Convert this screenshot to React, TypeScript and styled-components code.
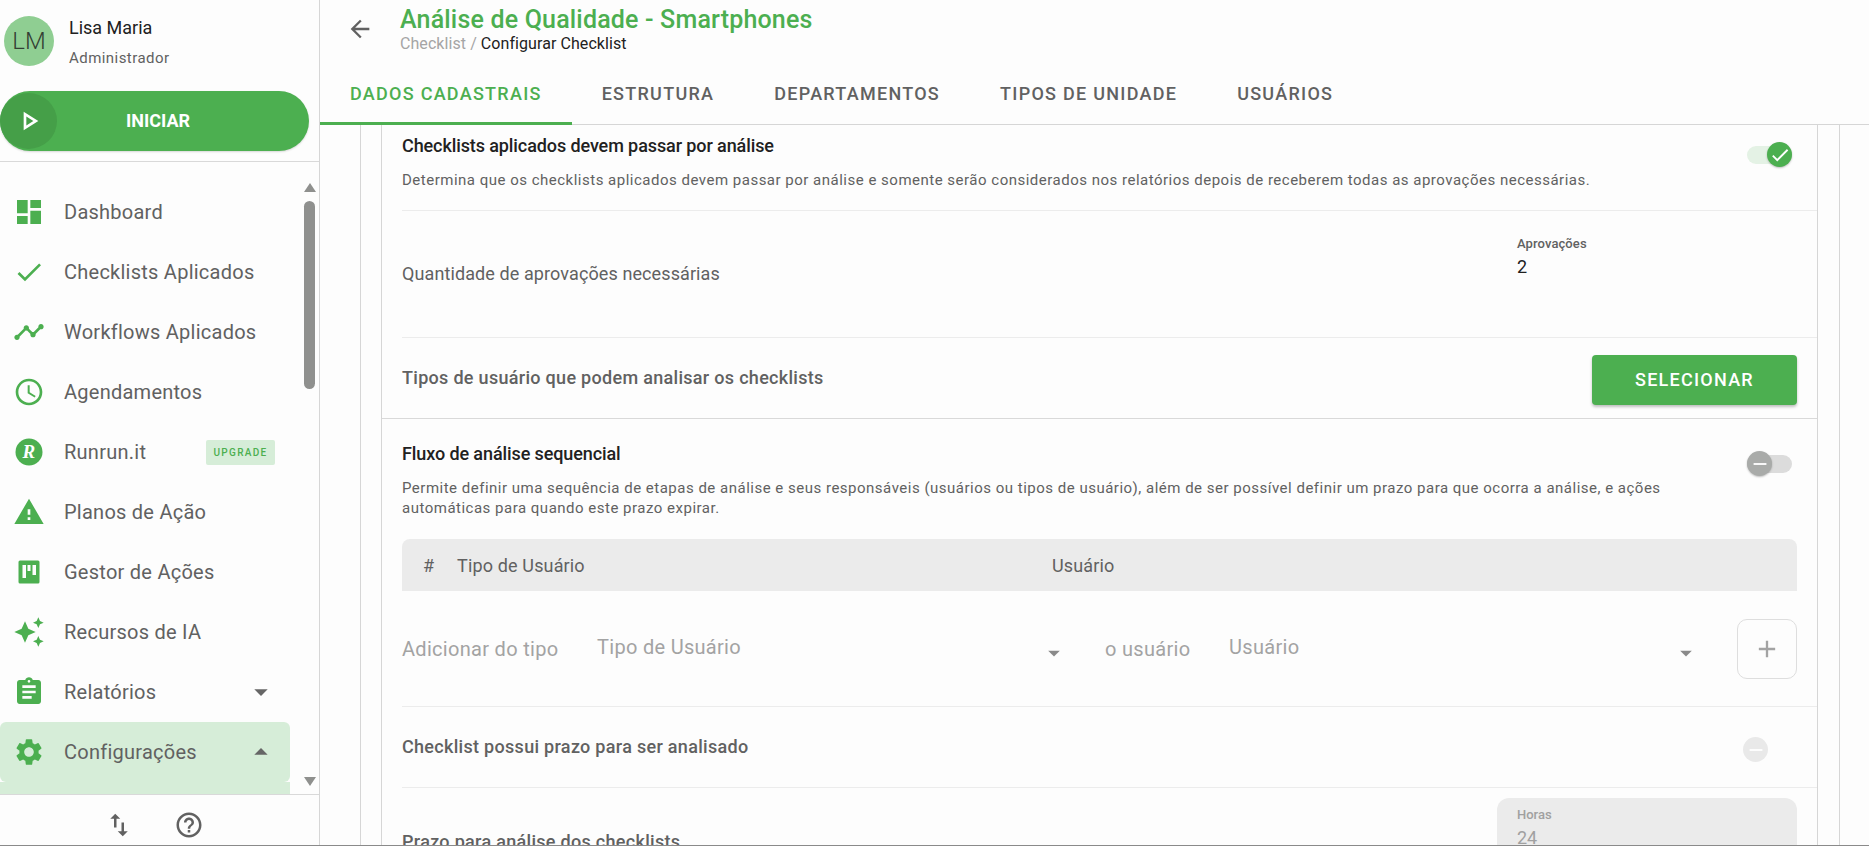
import React from 'react';
import styled, { createGlobalStyle } from 'styled-components';
import {
  MdDashboard, MdCheck, MdTimeline, MdOutlineAccessTime, MdWarning, MdAssignment, MdSettings,
  MdAutoAwesome, MdArrowDropDown, MdArrowDropUp, MdArrowBack, MdImportExport, MdHelpOutline,
  MdOutlinePlayArrow, MdAdd, MdRemove,
} from 'react-icons/md';

const green = '#4caf50';
const grey = '#616161';

const Global = createGlobalStyle`
  html, body { margin: 0; padding: 0; height: 100%; overflow: hidden; background: #fdfdfd; }
  * { box-sizing: border-box; }
  body { font-family: Roboto, "Liberation Sans", sans-serif; color: ${grey}; }
`;

const Page = styled.div`
  width: 1869px; height: 846px; display: grid; grid-template-columns: 320px 1fr;
  border-bottom: 1px solid #8a8a8a; overflow: hidden; background: #fdfdfd;
`;
const Sidebar = styled.aside`
  border-right: 1px solid #d6d6d6; display: flex; flex-direction: column; height: 845px; overflow: hidden;
`;
const Profile = styled.div`display: flex; padding: 16px 0 0 4px; height: 91px; gap: 15px;`;
const Avatar = styled.div`
  width: 50px; height: 50px; border-radius: 50%; background: #8fce92; color: #333e34;
  display: flex; align-items: center; justify-content: center; font-size: 24px; font-weight: 300;
`;
const ProfileText = styled.div`display: flex; flex-direction: column; padding-top: 2px;`;
const UserName = styled.div`font-size: 18px; line-height: 20px; color: #212121;`;
const UserRole = styled.div`font-size: 15px; line-height: 20px; margin-top: 10px; color: ${grey}; letter-spacing: .45px;`;
const StartButton = styled.div`
  width: 309px; height: 60px; border-radius: 30px; background: ${green}; position: relative;
  display: flex; align-items: center; justify-content: center; flex: none; padding: 0 0 2px 7px;
  color: #fff; font-size: 18px; font-weight: 700; box-shadow: 0 1px 2px rgba(0,0,0,.15);
`;
const StartCircle = styled.span`
  position: absolute; left: 0; top: 2px; width: 57px; height: 56px; border-radius: 50%;
  background: #459f48; display: flex; align-items: center; justify-content: center; font-size: 32px;
`;
const Divider = styled.div`height: 1px; background: #d9d9d9; margin-top: 10px; flex: none;`;
const NavArea = styled.nav`position: relative; flex: 1; overflow: hidden; padding-top: 20px;`;
const NavItem = styled.div<{ $active?: boolean }>`
  width: 290px; height: 60px; display: flex; align-items: center; padding-left: 13px; flex: none;
  border-radius: 6px; background: ${p => (p.$active ? '#d6edd8' : 'transparent')};
  font-size: 20px; letter-spacing: .25px; color: ${grey};
`;
const NavIcon = styled.span`
  width: 32px; height: 32px; display: flex; align-items: center; justify-content: center;
  margin-right: 19px; color: ${green}; font-size: 32px; flex: none;
`;
const NavCaret = styled.span`margin-left: auto; margin-right: 13px; font-size: 32px; display: flex; color: #666;`;
const Upgrade = styled.span`
  margin-left: auto; margin-right: 15px; width: 69px; height: 25px; border-radius: 2px; background: #d6edd8;
  color: ${green}; font-size: 10px; font-weight: 500; letter-spacing: 1.3px;
  display: flex; align-items: center; justify-content: center;
`;
const SubStrip = styled.div`width: 290px; height: 14px; background: #d6edd8;`;
const ScrollTrack = styled.div`position: absolute; top: 0; right: 3px; bottom: 0; width: 12px;`;
const ScrollThumb = styled.div`
  position: absolute; top: 39px; left: 0; width: 11px; height: 188px; border-radius: 6px; background: #8f908e;
`;
const ScrollArrow = styled.span<{ $up?: boolean }>`
  position: absolute; left: 0; width: 0; height: 0; border-left: 6px solid transparent; border-right: 6px solid transparent;
  ${p => (p.$up
    ? 'top: 21px; border-bottom: 9px solid #8f908e;'
    : 'top: 615px; border-top: 9px solid #8f908e;')}
`;
const SideFooter = styled.div`
  height: 51px; border-top: 1px solid #d9d9d9; flex: none; display: flex; align-items: center;
  justify-content: center; gap: 40px; color: #616161; padding-right: 11px; padding-top: 9px;
`;
const FootIcon = styled.span`display: flex; font-size: 30px;`;

const Main = styled.main`display: flex; flex-direction: column; height: 845px; min-width: 0;`;
const Header = styled.header`display: flex; height: 65px; flex: none;`;
const Back = styled.span`width: 80px; display: flex; justify-content: center; padding-top: 15px; font-size: 28px; color: ${grey};`;
const Titles = styled.div`display: flex; flex-direction: column;`;
const Title = styled.h1`margin: 5px 0 0; font-size: 25px; line-height: 30px; font-weight: 500; color: ${green}; letter-spacing: .18px;`;
const Crumbs = styled.div`font-size: 16px; line-height: 18px; color: #a5a5a5; letter-spacing: .07px;`;
const CrumbNow = styled.span`color: #212121;`;
const Tabs = styled.div`display: flex; height: 60px; border-bottom: 1px solid #d6d6d6; flex: none;`;
const Tab = styled.div<{ $active?: boolean }>`
  padding: 0 30px 1px; height: 60px; display: flex; align-items: center; margin-bottom: -1px;
  font-size: 18px; font-weight: 500; letter-spacing: 1.27px;
  color: ${p => (p.$active ? green : grey)};
  border-bottom: 3px solid ${p => (p.$active ? green : 'transparent')};
`;
const Outer = styled.div`
  margin: 0 29px 0 40px; padding: 0 21px 0 20px; flex: 1; min-height: 0; overflow: hidden;
  border-left: 1px solid #d6d6d6; border-right: 1px solid #d6d6d6;
`;
const Card = styled.div`border-left: 1px solid #d6d6d6; border-right: 1px solid #d6d6d6; height: 100%;`;
const Section = styled.section<{ $height: number; $strong?: boolean; $inset?: boolean }>`
  height: ${p => p.$height}px; margin: ${p => (p.$inset ? '0 0 0 20px' : '0')};
  padding-left: ${p => (p.$inset ? 0 : 20)}px; padding-right: 20px; position: relative; flex: none;
  border-bottom: 1px solid ${p => (p.$strong ? '#d9d9d9' : '#ececec')};
`;
const SwitchRow = styled.div`display: flex; justify-content: space-between;`;
const RowTitle = styled.div<{ $top: number }>`
  font-size: 18px; line-height: 20px; font-weight: 500; color: #212121; letter-spacing: -.1px; padding-top: ${p => p.$top}px;
`;
const RowDesc = styled.p<{ $top: number }>`
  margin: ${p => p.$top}px 0 0; font-size: 15px; line-height: 20px; letter-spacing: .5px; color: ${grey}; max-width: 1300px;
`;
const CenterRow = styled.div`display: flex; align-items: center; justify-content: space-between; height: 100%;`;
const PlainLabel = styled.div`font-size: 18px; letter-spacing: .1px; color: ${grey}; margin-bottom: 2px;`;
const StrongLabel = styled.div`font-size: 18px; font-weight: 500; letter-spacing: .3px; color: ${grey}; margin-bottom: 2px;`;
const FieldWrap = styled.div`
  width: 300px; padding: 9px 20px 0; height: 100px; align-self: flex-start; margin-top: 16px;
`;
const FieldLabel = styled.div`font-size: 13px; line-height: 16px; font-weight: 500; color: ${grey}; letter-spacing: .1px;`;
const FieldValue = styled.div`font-size: 18px; line-height: 22px; margin-top: 4px; color: #212121;`;
const SelectButton = styled.div`
  width: 205px; height: 50px; margin-top: 3px; border-radius: 4px; background: ${green}; color: #fff;
  font-size: 18px; font-weight: 500; letter-spacing: 1.25px; display: flex; align-items: center; justify-content: center;
  box-shadow: 0 2px 3px rgba(0,0,0,.25);
`;
const Track = styled.div<{ $on?: boolean }>`
  width: 45px; height: 18px; border-radius: 9px; position: relative; margin: ${p => (p.$on ? '21px 5px 0 0' : '36px 5px 0 0')};
  background: ${p => (p.$on ? '#e4f2e5' : '#dcdcdc')}; flex: none;
`;
const Thumb = styled.span<{ $on?: boolean }>`
  position: absolute; top: -4px; ${p => (p.$on ? 'right: 0;' : 'left: 0;')} width: 25px; height: 25px; border-radius: 50%;
  background: ${p => (p.$on ? green : '#a9aba9')}; color: #fff; display: flex; align-items: center; justify-content: center;
  font-size: 22px; box-shadow: 0 1px 2px rgba(0,0,0,.25);
`;
const TableHead = styled.div`
  position: absolute; left: 0; right: 20px; top: 120px; height: 52px; border-radius: 8px 8px 0 0; background: #ebebeb;
  display: grid; grid-template-columns: 34px 595px 1fr; align-items: center; padding-left: 21px;
  font-size: 18px; color: ${grey}; letter-spacing: .15px;
`;
const AddRow = styled.div`
  position: absolute; left: 0; right: 20px; top: 200px; height: 60px;
  display: flex; align-items: center; color: #a3a3a3;
`;
const AddLabel = styled.div<{ $width: number; $left?: number }>`
  width: ${p => p.$width}px; margin-left: ${p => p.$left ?? 0}px;
  font-size: 20px; letter-spacing: .3px; flex: none; color: #a3a3a3;
`;
const AddSelect = styled.div<{ $width: number }>`
  width: ${p => p.$width}px; display: flex; align-items: center; justify-content: space-between; flex: none;
  font-size: 20px; letter-spacing: .3px; color: #a3a3a3; padding-bottom: 5px;
`;
const Caret = styled.span`display: flex; font-size: 28px; color: #8a8a8a; margin: 8px -21px -5px 0;`;
const PlusBox = styled.div`
  margin-left: auto; width: 60px; height: 60px; border: 1px solid #dedede; border-radius: 10px; flex: none;
  display: flex; align-items: center; justify-content: center; font-size: 28px; color: #a3a3a3;
`;
const DisabledThumb = styled.span`
  width: 25px; height: 25px; border-radius: 50%; background: #e9e9e9; color: #fff; margin: 5px 29px 0 0;
  display: flex; align-items: center; justify-content: center; font-size: 22px;
`;
const DeadlineRow = styled.div`display: flex; justify-content: space-between; align-items: flex-start;`;
const DeadlineLabel = styled.div`font-size: 18px; font-weight: 500; letter-spacing: .3px; color: ${grey}; padding-top: 43px;`;
const MutedField = styled.div`
  width: 300px; height: 90px; margin-top: 10px; border-radius: 12px 12px 0 0; background: #ebebeb; padding: 9px 20px;
`;
const MutedLabel = styled.div`font-size: 13px; line-height: 16px; font-weight: 500; color: #a0a0a0;`;
const MutedValue = styled.div`font-size: 18px; line-height: 22px; margin-top: 4px; color: #a0a0a0;`;

const KanbanIcon = () => (
  <svg width="32" height="32" viewBox="0 0 32 32" fill="currentColor">
    <path d="M7 4.5h18a1.5 1.5 0 0 1 1.5 1.5v20a1.5 1.5 0 0 1-1.5 1.5H7A1.5 1.5 0 0 1 5.5 26V6A1.5 1.5 0 0 1 7 4.5z" />
    <rect x="9.5" y="9" width="3.5" height="13" fill="#fdfdfd" />
    <rect x="14.5" y="9" width="3" height="6" fill="#fdfdfd" />
    <rect x="19.5" y="9" width="3.5" height="10" fill="#fdfdfd" />
  </svg>
);
const RunrunIcon = () => (
  <svg width="32" height="32" viewBox="0 0 32 32">
    <circle cx="16" cy="16" r="13.5" fill={green} />
    <text x="16" y="22" textAnchor="middle" fontFamily='"Liberation Serif", serif' fontStyle="italic" fontWeight="700" fontSize="19" fill="#fff">R</text>
  </svg>
);

const nav: { label: string; icon: React.ReactNode; extra?: 'upgrade' | 'down' | 'up'; active?: boolean }[] = [
  { label: 'Dashboard', icon: <MdDashboard /> },
  { label: 'Checklists Aplicados', icon: <MdCheck /> },
  { label: 'Workflows Aplicados', icon: <MdTimeline /> },
  { label: 'Agendamentos', icon: <MdOutlineAccessTime /> },
  { label: 'Runrun.it', icon: <RunrunIcon />, extra: 'upgrade' },
  { label: 'Planos de Ação', icon: <MdWarning /> },
  { label: 'Gestor de Ações', icon: <KanbanIcon /> },
  { label: 'Recursos de IA', icon: <MdAutoAwesome /> },
  { label: 'Relatórios', icon: <MdAssignment />, extra: 'down' },
  { label: 'Configurações', icon: <MdSettings />, extra: 'up', active: true },
];
const tabs = ['DADOS CADASTRAIS', 'ESTRUTURA', 'DEPARTAMENTOS', 'TIPOS DE UNIDADE', 'USUÁRIOS'];

export default function App() {
  return (
    <Page>
      <Global />
      <Sidebar>
        <Profile>
          <Avatar>LM</Avatar>
          <ProfileText>
            <UserName>Lisa Maria</UserName>
            <UserRole>Administrador</UserRole>
          </ProfileText>
        </Profile>
        <StartButton>
          <StartCircle><MdOutlinePlayArrow /></StartCircle>
          INICIAR
        </StartButton>
        <Divider />
        <NavArea>
          {nav.map(n => (
            <NavItem key={n.label} $active={n.active}>
              <NavIcon>{n.icon}</NavIcon>
              {n.label}
              {n.extra === 'upgrade' && <Upgrade>UPGRADE</Upgrade>}
              {n.extra === 'down' && <NavCaret><MdArrowDropDown /></NavCaret>}
              {n.extra === 'up' && <NavCaret><MdArrowDropUp /></NavCaret>}
            </NavItem>
          ))}
          <SubStrip />
          <ScrollTrack>
            <ScrollArrow $up />
            <ScrollThumb />
            <ScrollArrow />
          </ScrollTrack>
        </NavArea>
        <SideFooter>
          <FootIcon><MdImportExport /></FootIcon>
          <FootIcon><MdHelpOutline /></FootIcon>
        </SideFooter>
      </Sidebar>
      <Main>
        <Header>
          <Back><MdArrowBack /></Back>
          <Titles>
            <Title>Análise de Qualidade - Smartphones</Title>
            <Crumbs>Checklist / <CrumbNow>Configurar Checklist</CrumbNow></Crumbs>
          </Titles>
        </Header>
        <Tabs>
          {tabs.map((t, i) => <Tab key={t} $active={i === 0}>{t}</Tab>)}
        </Tabs>
        <Outer>
          <Card>
            <Section $height={86} $inset>
              <SwitchRow>
                <RowTitle $top={11}>Checklists aplicados devem passar por análise</RowTitle>
                <Track $on><Thumb $on><MdCheck /></Thumb></Track>
              </SwitchRow>
              <RowDesc $top={6}>Determina que os checklists aplicados devem passar por análise e somente serão considerados nos relatórios depois de receberem todas as aprovações necessárias.</RowDesc>
            </Section>
            <Section $height={127} $inset>
              <CenterRow>
                <PlainLabel>Quantidade de aprovações necessárias</PlainLabel>
                <FieldWrap>
                  <FieldLabel>Aprovações</FieldLabel>
                  <FieldValue>2</FieldValue>
                </FieldWrap>
              </CenterRow>
            </Section>
            <Section $height={81} $strong>
              <CenterRow>
                <StrongLabel>Tipos de usuário que podem analisar os checklists</StrongLabel>
                <SelectButton>SELECIONAR</SelectButton>
              </CenterRow>
            </Section>
            <Section $height={288} $inset>
              <SwitchRow>
                <RowTitle $top={25}>Fluxo de análise sequencial</RowTitle>
                <Track><Thumb><MdRemove /></Thumb></Track>
              </SwitchRow>
              <RowDesc $top={5}>Permite definir uma sequência de etapas de análise e seus responsáveis (usuários ou tipos de usuário), além de ser possível definir um prazo para que ocorra a análise, e ações automáticas para quando este prazo expirar.</RowDesc>
              <TableHead>
                <span>#</span>
                <span>Tipo de Usuário</span>
                <span>Usuário</span>
              </TableHead>
              <AddRow>
                <AddLabel $width={195}>Adicionar do tipo</AddLabel>
                <AddSelect $width={450}>Tipo de Usuário<Caret><MdArrowDropDown /></Caret></AddSelect>
                <AddLabel $width={124} $left={58}>o usuário</AddLabel>
                <AddSelect $width={450}>Usuário<Caret><MdArrowDropDown /></Caret></AddSelect>
                <PlusBox><MdAdd /></PlusBox>
              </AddRow>
            </Section>
            <Section $height={81} $inset>
              <CenterRow>
                <StrongLabel>Checklist possui prazo para ser analisado</StrongLabel>
                <DisabledThumb><MdRemove /></DisabledThumb>
              </CenterRow>
            </Section>
            <Section $height={90} $inset>
              <DeadlineRow>
                <DeadlineLabel>Prazo para análise dos checklists</DeadlineLabel>
                <MutedField>
                  <MutedLabel>Horas</MutedLabel>
                  <MutedValue>24</MutedValue>
                </MutedField>
              </DeadlineRow>
            </Section>
          </Card>
        </Outer>
      </Main>
    </Page>
  );
}
